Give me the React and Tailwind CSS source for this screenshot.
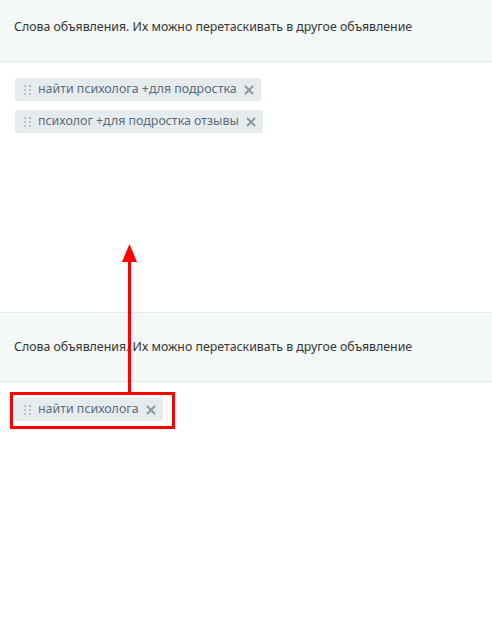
const Handle = () => (
  <svg width="7" height="10" viewBox="0 0 7 10" className="shrink-0">
    {[0, 4, 8].map(y => (
      <g key={y} fill="#b8c2c9">
        <rect x="0" y={y} width="2" height="2" />
        <rect x="5" y={y} width="2" height="2" />
      </g>
    ))}
  </svg>
);

const Close = () => (
  <svg width="10" height="10" viewBox="0 0 10 10" className="shrink-0">
    <path d="M1 1 L9 9 M9 1 L1 9" stroke="#8d979e" strokeWidth="2" />
  </svg>
);

const Tag = ({ text }) => (
  <div className="inline-flex items-center h-[23px] bg-[#e6ecee] rounded-[2px] pl-[9px] pr-[7px] gap-[7px]">
    <Handle />
    <span className="text-[12.4px] text-[#5b6d7c] leading-none">{text}</span>
    <Close />
  </div>
);

const Header = ({ className }) => (
  <div className={`flex items-center bg-[#f5f8f9] border-b border-[#e4e9eb] px-[14px] text-[12.35px] text-[#333] ${className}`}>
    Слова объявления. Их можно перетаскивать в другое объявление
  </div>
);

const App = () => {
  return (
    <div className="relative w-[492px] h-[632px] bg-white overflow-hidden" style={{ fontFamily: '"Noto Sans", "DejaVu Sans", sans-serif' }}>
      <Header className="h-[62px] pb-[6px]" />
      <div className="h-[250px] px-[15px] pt-[16px] flex flex-col items-start gap-[9px]">
        <Tag text="найти психолога +для подростка" />
        <Tag text="психолог +для подростка отзывы" />
      </div>
      <Header className="h-[70px] border-t" />
      <div className="px-[15px] pt-[16px] flex flex-col items-start">
        <Tag text="найти психолога" />
      </div>

      {/* annotation */}
      <div className="absolute left-[10px] top-[392px] w-[165px] h-[37px] border-[3px] border-[#ff0000]" />
      <div className="absolute left-[128px] top-[258px] w-[3px] h-[135px] bg-[#ff0000]" />
      <svg className="absolute left-[122px] top-[244px]" width="15" height="18" viewBox="0 0 15 18">
        <path d="M7.5 0 L15 18 L0 18 Z" fill="#ff0000" />
      </svg>
    </div>
  );
};

export default App;
